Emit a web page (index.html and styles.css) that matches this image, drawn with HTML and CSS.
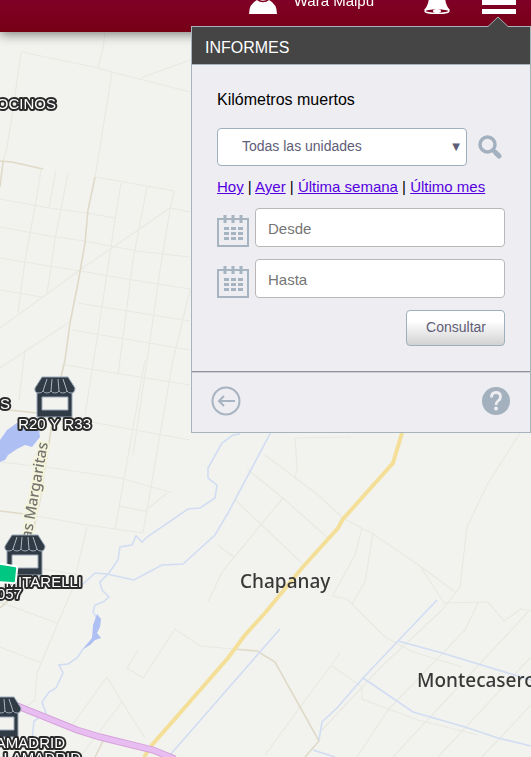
FILE: index.html
```html
<!DOCTYPE html>
<html lang="es">
<head>
  <meta charset="UTF-8">
  <meta name="viewport" content="width=device-width, initial-scale=1.0">
  <title>Informes - Kilómetros muertos</title>
  <link rel="stylesheet" href="styles.css">
</head>
<body>

  <!-- Mapa -->
  <svg class="map" viewBox="0 0 531 757" preserveAspectRatio="xMinYMin slice" role="img" aria-label="Mapa">
    <defs>
      <symbol id="store" viewBox="0 0 42 42">
        <path d="M3 15h35v26H3z" fill="#303b45" stroke="#9aa8b8"/>
        <path d="M8 21h26v13H8z" fill="#f2f3ee" stroke="#9aa8b8"/>
        <path d="M8 1h26l7 11q0 5-4 5-3 0-4-2-1 2-4 2-3 0-4-2-1 2-4 2t-4-2q-1 2-4 2-3 0-4-2-1 2-4 2-5 0-4-5z" fill="#303b45" stroke="#9aa8b8"/>
        <path d="M13 3L9 15M18 3l-1 12M24 3l1 12M29 3l4 12" stroke="#aab6c2" fill="none"/>
      </symbol>
    </defs>

    <!-- calles menores -->
    <g class="street">
      <path d="M22 52L98 68 112 72 190 92M105 33L103 48 98 67M190 60L141 78M21 52L13 110 7 147 3 162M112 72L100 147 95 177"/>
      <path d="M41 170L35 207 25 260 18 313M56 170L49 208M68 173L55 240 47 293"/>
      <path d="M0 199L49 208 87 213 115 218M0 227L55 237 85 241 137 251 190 257M0 258L80 271 133 280 190 289M0 290L42 297"/>
      <path d="M95 177L147 186 174 191 170 210 160 270 152 327 133 455M0 328L80 270 170 208 190 212M0 368L68 323"/>
      <path d="M121 183L115 220 100 320 85 415M147 187L133 260 118 375M78 303L190 321M72 330L190 350M65 365L190 385M25 350L19 400"/>
      <path d="M190 290L173 360 143 533M145 360L133 428 115 530M80 420L190 440M0 462L53 468 120 478 173 493M118 506L145 511 167 493M25 514L87 525 143 533"/>
      <path d="M87 527L72 590 57 625 37 673 35 700 22 710M43 569L80 575M0 602L57 623M0 647L42 663"/>
      <path d="M107 677L72 725M107 677L122 702 145 738M122 702L80 757M138 650L127 668 143 678 175 629 200 646 233 649"/>
      <path d="M265 455L318 495 343 518 373 534 420 566 444 603M420 566L455 592M520 433L487 485 467 527 460 587 442 610 380 668 322 730"/>
      <path d="M444 603L488 602 504 621 521 609 531 611M478 603L465 630 388 710 357 757M528 612L393 757M531 657L438 757M531 705L482 757"/>
      <path d="M247 469L283 498 328 538M283 498L222 572 208 602M235 500L302 563M295 478L297 468 295 438 351 437M218 545L235 558"/>
      <path d="M362 528L355 555 333 595M373 533L365 582 352 604M332 596L347 599 385 637 413 652 462 667M340 653L265 755M332 666L362 687 362 699 418 720 478 735"/>
    </g>
    <g class="road">
      <path d="M0 161L12 162 43 169M3 162L0 187M0 409L37 413M0 511L25 514M106 735L95 757"/>
      <path d="M95 177L88 210 85 243 78 283 70 323 65 360 61 377 51 430 40 500 27 560 20 590 0 608"/>
      <path d="M233 649L257 651 275 662 319 741 305 757"/>
    </g>

    <!-- agua -->
    <g class="river">
      <path d="M240 434L233 435 222 443 208 468 208 478 217 485 215 498 200 508 188 509 147 537 142 542 136 536 132 545 120 547 118 560 109 573 100 582 102 590 109 597 103 602 95 605 93 612 96 617"/>
      <path d="M272 430L228 513 215 535 183 564 162 565 134 580 107 574 95 573 82 585"/>
      <path d="M83 649L77 658 68 664 59 665 63 673 56 688 49 692 42 702 46 713 34 721 32 740"/>
      <path d="M280 629L170 755M437 600L398 641 363 678 337 708 322 722 319 740M398 641L442 653 531 680M363 678L413 712 465 727 498 738 531 746M313 750L335 757"/>
    </g>
    <path class="lake" d="M0 440L7 430 17 423 38 423 40 437 32 447 25 445 17 449 8 455 5 460 0 462z"/>
    <path class="lake" d="M97 614L101 619 100 627 97 633 101 638 95 640 90 645 82 650 92 638 93 625z"/>

    <!-- rutas -->
    <path class="route" d="M402 433L393 463 343 519 338 528 302 568 265 613 245 635 228 658 187 705 152 745 144 757"/>
    <path class="highway-edge" d="M15 705L77 730 100 737 153 750 175 759"/>
    <path class="highway" d="M15 705L77 730 100 737 153 750 175 759"/>

    <text class="street-name" text-anchor="end" transform="translate(48 443) rotate(-80)">Las Margaritas</text>
    <text class="town" x="240" y="588">Chapanay</text>
    <text class="town" x="417" y="687">Montecaseros</text>

    <!-- puntos de interés -->
    <use href="#store" x="34" y="376" width="42" height="42"/>
    <use href="#store" x="4" y="534" width="42" height="42"/>
    <use href="#store" x="-20" y="696" width="42" height="42"/>
    <g class="poi" text-anchor="end">
      <text x="56" y="109">OCINOS</text>
      <text x="10" y="409">S</text>
      <text x="91" y="429">R20 Y R33</text>
      <text x="82" y="587">MITARELLI</text>
      <text x="65" y="748">AMADRID</text>
      <text x="81" y="763">LAMADRID</text>
    </g>
    <path d="M-4 563L14 566q4 0 3 4l-1 10q0 4-4 3L-4 582z" fill="#00c781" stroke="#fff" stroke-width="2"/>
    <text class="poi" text-anchor="end" x="22" y="599">057</text>
  </svg>

  <header class="topbar">
    <a class="user" href="#">
      <svg width="30" height="30" viewBox="0 0 30 30" fill="#fff" aria-hidden="true">
        <path d="M1 30q0-10 8-14h12q8 4 8 14z"/>
        <circle cx="15" cy="9" r="8.500" stroke="#7d0020" stroke-width="1.500"/>
      </svg>
      <span>Wara Maipú</span>
    </a>
    <button class="icon-btn" type="button" aria-label="Alertas">
      <svg width="26" height="30" viewBox="0 0 26 30" aria-hidden="true">
        <path d="M13 0q8 0 8 12 0 9 5 14H0q5-5 5-14 0-12 8-12z" fill="#fff"/>
        <ellipse cx="13" cy="27" rx="12" ry="2.500" fill="#7b0020" stroke="#fff" stroke-width="1.500"/>
        <ellipse cx="13" cy="27" rx="4" ry="2" fill="#fff"/>
      </svg>
    </button>
    <button class="icon-btn" type="button" aria-label="Menú">
      <svg width="34" height="30" viewBox="0 0 34 30" fill="#fff" aria-hidden="true">
        <path d="M0 7h34v5H0zM0 16h34v5H0zM0 25h34v5H0z"/>
      </svg>
    </button>
  </header>

  <!-- Panel de informes -->
  <section class="panel">
    <svg class="panel-arrow" width="20" height="11" viewBox="0 0 20 11" aria-hidden="true">
      <path d="M0 10.5L10 1l10 9.5V11H0z" fill="#454545"/>
      <path d="M0 10.5L10 1l10 9.5" fill="none" stroke="#a3b0b8"/>
    </svg>
    <h1 class="panel-title">INFORMES</h1>

    <form class="report">
      <h2>Kilómetros muertos</h2>

      <div class="unit-row">
        <div class="select-box">
          <select aria-label="Unidades">
            <option>Todas las unidades</option>
          </select>
          <span class="select-arrow" aria-hidden="true">▼</span>
        </div>
        <button class="icon-btn" type="button" aria-label="Buscar">
          <svg width="24" height="24" viewBox="0 0 24 24" fill="none" stroke="#a2b0bf" aria-hidden="true">
            <circle cx="9.500" cy="9.500" r="7.500" stroke-width="3.5"/>
            <path d="M15 15l4 4" stroke-width="4"/>
            <path d="M18 18l3 3" stroke-width="5" stroke-linecap="round"/>
          </svg>
        </button>
      </div>

      <nav class="ranges">
        <a href="#hoy">Hoy</a> | <a href="#ayer">Ayer</a> | <a href="#semana">Última semana</a> | <a href="#mes">Último mes</a>
      </nav>

      <div class="date-row">
        <label for="desde" aria-label="Desde">
          <svg width="32" height="32" viewBox="0 0 32 32" aria-hidden="true">
            <path d="M1 4h30v27H1z" fill="none" stroke="#a6b3c1" stroke-width="2"/>
            <path d="M8 0v8M16 0v8M24 0v8" stroke="#a6b3c1" stroke-width="3"/>
            <path d="M7 13.500h19M7 18.500h19M7 23.500h19" stroke="#a6b3c1" stroke-width="3" stroke-dasharray="5 2"/>
          </svg>
        </label>
        <input id="desde" type="text" placeholder="Desde">
      </div>

      <div class="date-row">
        <label for="hasta" aria-label="Hasta">
          <svg width="32" height="32" viewBox="0 0 32 32" aria-hidden="true">
            <path d="M1 4h30v27H1z" fill="none" stroke="#a6b3c1" stroke-width="2"/>
            <path d="M8 0v8M16 0v8M24 0v8" stroke="#a6b3c1" stroke-width="3"/>
            <path d="M7 13.500h19M7 18.500h19M7 23.500h19" stroke="#a6b3c1" stroke-width="3" stroke-dasharray="5 2"/>
          </svg>
        </label>
        <input id="hasta" type="text" placeholder="Hasta">
      </div>

      <button class="submit" type="submit">Consultar</button>
    </form>

    <footer class="panel-footer">
      <button class="icon-btn" type="button" aria-label="Volver">
        <svg width="30" height="30" viewBox="0 0 30 30" fill="none" stroke="#a6b3c1" stroke-width="2" aria-hidden="true">
          <circle cx="15" cy="15" r="13.5"/>
          <path d="M24 15H8M13 10l-5 5 5 5"/>
        </svg>
      </button>
      <button class="icon-btn" type="button" aria-label="Ayuda">
        <svg width="28" height="28" viewBox="0 0 28 28" aria-hidden="true">
          <circle cx="14" cy="14" r="14" fill="#a3b0bd"/>
          <path d="M9.500 10.500q0-5 4.500-5t4.500 4.500q0 2-2.500 4-2 1.500-2 4" fill="none" stroke="#eeedf2" stroke-width="2.800"/>
          <circle cx="14" cy="21.500" r="2" fill="#eeedf2"/>
        </svg>
      </button>
    </footer>
  </section>

</body>
</html>
```
FILE: styles.css
```css
* { margin: 0; padding: 0; box-sizing: border-box; }

body {
  min-height: 100vh;
  font-family: "Liberation Sans", Arial, sans-serif;
  font-size: 15px;
  background: #f2f3ee;
  overflow: hidden;
}

button { font-family: inherit; cursor: pointer; }
svg { display: block; }

/* Mapa */
.map {
  position: fixed;
  top: 0;
  left: 0;
  width: 100%;
  height: 100%;
}
.street { fill: none; stroke: #e9e9e3; stroke-width: 1.2; }
.road { fill: none; stroke: #dfdac8; stroke-width: 1.6; }
.river { fill: none; stroke: #d2ddf3; stroke-width: 1.6; }
.lake { fill: #aebff3; }
.route { fill: none; stroke: #f4df98; stroke-width: 4; }
.highway-edge { fill: none; stroke: #d5a3d8; stroke-width: 7; }
.highway { fill: none; stroke: #e8bdf2; stroke-width: 5; }

.town {
  font-family: "Noto Sans", sans-serif;
  font-size: 19px;
  font-weight: 500;
  fill: #383838;
}
.street-name {
  font-family: "Noto Sans", sans-serif;
  font-size: 15px;
  font-weight: 500;
  fill: #747470;
  stroke: #f4f4dc;
  stroke-width: 4px;
  paint-order: stroke;
}
.poi {
  font-size: 15px;
  fill: #fff;
  stroke: #2a2a2a;
  stroke-width: 4px;
  stroke-linejoin: round;
  paint-order: stroke;
}

/* Barra superior */
.topbar {
  position: relative;
  display: flex;
  justify-content: flex-end;
  align-items: flex-end;
  gap: 32px;
  height: 32px;
  padding: 0 15px 18px;
  background: linear-gradient(#800026, #760016);
  box-shadow: 0 2px 12px rgba(0, 0, 0, 0.5);
  overflow: hidden;
}
.user {
  display: flex;
  align-items: flex-end;
  gap: 16px;
  margin-right: 18px;
  color: #fff;
  text-decoration: none;
}
.user span { line-height: 17px; padding-bottom: 5px; }
.icon-btn { border: none; background: none; }

/* Panel */
.panel {
  position: absolute;
  top: 26px;
  right: 0;
  width: 340px;
  max-width: 100%;
  border: 1px solid #a8b4bc;
  background: #eeedf2;
}
.panel-arrow {
  position: absolute;
  top: -11px;
  right: 22px;
}
.panel-title {
  padding: 12px 13px 7px;
  font-size: 16px;
  font-weight: normal;
  line-height: 18px;
  color: #fff;
  background: #454545;
  border-bottom: 1px solid #a8b4bc;
}
.report {
  display: flex;
  flex-direction: column;
  gap: 12px;
  padding: 25px;
}
.report h2 {
  margin-bottom: 6px;
  font-size: 16px;
  font-weight: normal;
  line-height: 20px;
}

.unit-row {
  display: flex;
  align-items: center;
  gap: 11px;
  margin-right: 3px;
}
.select-box { position: relative; flex: 1; }
.select-box select {
  display: block;
  width: 100%;
  height: 38px;
  padding: 0 24px 2px;
  font: 14px "Liberation Sans", Arial, sans-serif;
  color: #605d78;
  background: #fff;
  border: 1px solid #9eb0be;
  border-radius: 4px;
  appearance: none;
}
.select-arrow {
  position: absolute;
  top: 11px;
  right: 7px;
  font: 10px/16px "DejaVu Sans", sans-serif;
  color: #605d78;
  pointer-events: none;
}

.ranges { line-height: 18px; }
.ranges a { color: #5500e0; }

.date-row {
  display: flex;
  align-items: flex-end;
  gap: 6px;
}
.date-row input {
  flex: 1;
  min-width: 0;
  height: 39px;
  padding: 2px 12px 0;
  font: 15px "Liberation Sans", Arial, sans-serif;
  background: #fff;
  border: 1px solid #b8b8b8;
  border-radius: 4px;
}
.date-row input::placeholder { color: #757575; }

.submit {
  align-self: flex-end;
  height: 36px;
  padding: 0 18px 2px 19px;
  font-size: 14px;
  color: #605d78;
  background: linear-gradient(#fff 30%, #d2d2d2);
  border: 1px solid #9eb0be;
  border-radius: 4px;
}

.panel-footer {
  display: flex;
  justify-content: space-between;
  align-items: center;
  padding: 14px 20px 16px 19px;
  border-top: 1px solid #918f9b;
  box-shadow: inset 0 1px #d0cfd8;
}
```
